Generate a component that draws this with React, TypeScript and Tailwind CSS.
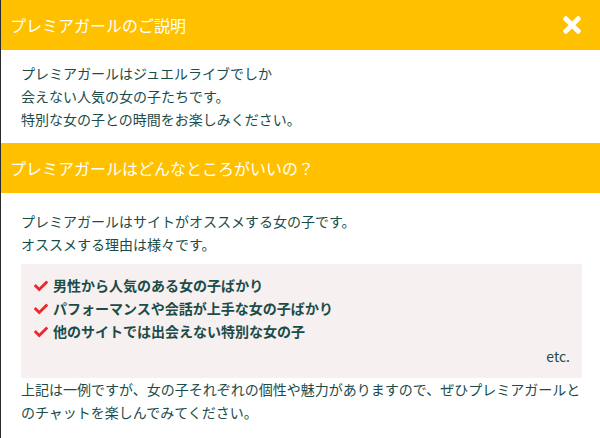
import { FaTimes, FaCheck } from "react-icons/fa";

const FONT = { fontFamily: '"Noto Sans CJK JP", "Noto Sans", sans-serif' };

function Header({ title, close }: { title: string; close?: boolean }) {
  return (
    <div className="h-[50px] bg-[#ffc000] flex items-center justify-between pl-[9px] pr-[15px]">
      <h2 className="text-[16px] text-white leading-none">{title}</h2>
      {close && <FaTimes className="text-white text-[26px]" />}
    </div>
  );
}

const POINTS = [
  "男性から人気のある女の子ばかり",
  "パフォーマンスや会話が上手な女の子ばかり",
  "他のサイトでは出会えない特別な女の子",
];

export default function App() {
  return (
    <div className="w-[600px] h-[438px] overflow-hidden bg-white border-l border-[#2a2a2a] text-[14px] leading-[23px] text-[#1b4c48]" style={FONT}>
      <Header title="プレミアガールのご説明" close />
      <div className="pl-[20px] pr-[19px] pt-[12px] pb-[12px]">
        <p>プレミアガールはジュエルライブでしか</p>
        <p>会えない人気の女の子たちです。</p>
        <p>特別な女の子との時間をお楽しみください。</p>
      </div>
      <Header title="プレミアガールはどんなところがいいの？" />
      <div className="pl-[20px] pr-[18px] pt-[17px]">
        <p>プレミアガールはサイトがオススメする女の子です。</p>
        <p>オススメする理由は様々です。</p>
        <div className="mt-[8px] bg-[#f7f0f0] pl-[13px] pr-[12px] pt-[10px] pb-[10px]">
          <ul>
            {POINTS.map((p) => (
              <li key={p} className="flex items-center gap-[5px] font-bold">
                <FaCheck className="text-[#f0262c] text-[14px] shrink-0" />
                <span>{p}</span>
              </li>
            ))}
          </ul>
          <p className="text-right mt-[2px]">etc.</p>
        </div>
        <p>上記は一例ですが、女の子それぞれの個性や魅力がありますので、ぜひプレミアガールとのチャットを楽しんでみてください。</p>
      </div>
    </div>
  );
}
